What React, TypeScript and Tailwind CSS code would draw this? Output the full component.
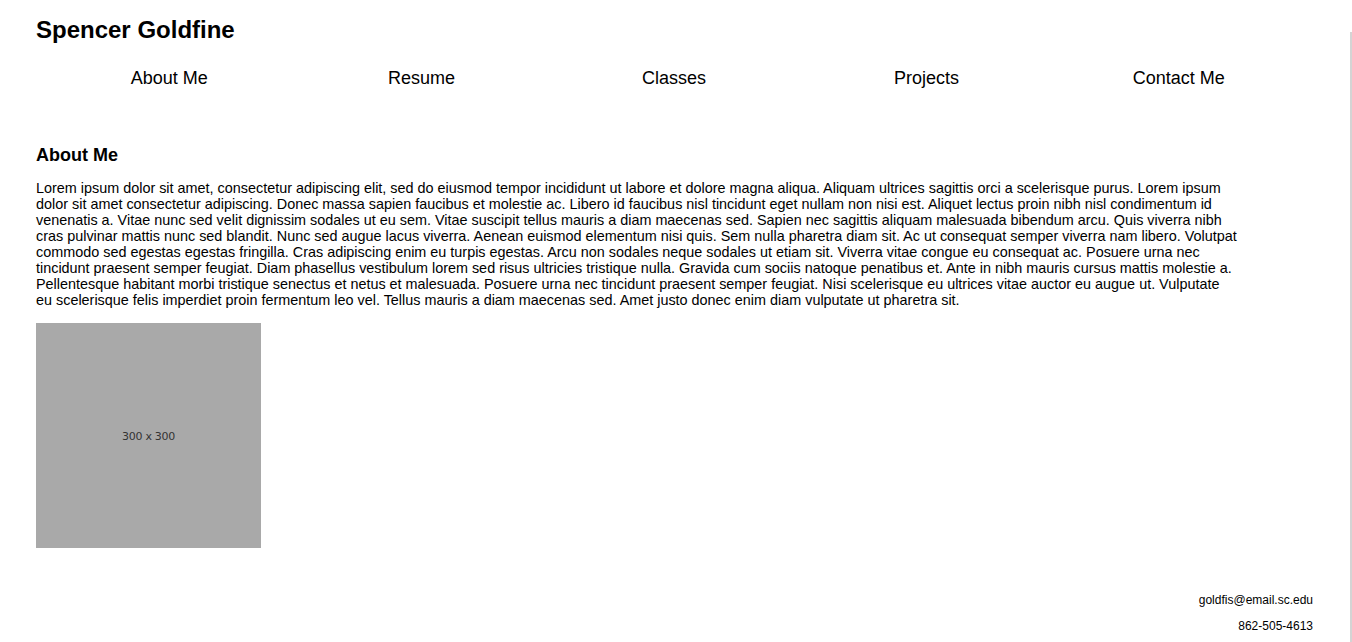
import React from 'react';

const NAV = ['About Me', 'Resume', 'Classes', 'Projects', 'Contact Me'];

const ABOUT =
  'Lorem ipsum dolor sit amet, consectetur adipiscing elit, sed do eiusmod tempor incididunt ut labore et dolore magna aliqua. Aliquam ultrices sagittis orci a scelerisque purus. Lorem ipsum dolor sit amet consectetur adipiscing. Donec massa sapien faucibus et molestie ac. Libero id faucibus nisl tincidunt eget nullam non nisi est. Aliquet lectus proin nibh nisl condimentum id venenatis a. Vitae nunc sed velit dignissim sodales ut eu sem. Vitae suscipit tellus mauris a diam maecenas sed. Sapien nec sagittis aliquam malesuada bibendum arcu. Quis viverra nibh cras pulvinar mattis nunc sed blandit. Nunc sed augue lacus viverra. Aenean euismod elementum nisi quis. Sem nulla pharetra diam sit. Ac ut consequat semper viverra nam libero. Volutpat commodo sed egestas egestas fringilla. Cras adipiscing enim eu turpis egestas. Arcu non sodales neque sodales ut etiam sit. Viverra vitae congue eu consequat ac. Posuere urna nec tincidunt praesent semper feugiat. Diam phasellus vestibulum lorem sed risus ultricies tristique nulla. Gravida cum sociis natoque penatibus et. Ante in nibh mauris cursus mattis molestie a. Pellentesque habitant morbi tristique senectus et netus et malesuada. Posuere urna nec tincidunt praesent semper feugiat. Nisi scelerisque eu ultrices vitae auctor eu augue ut. Vulputate eu scelerisque felis imperdiet proin fermentum leo vel. Tellus mauris a diam maecenas sed. Amet justo donec enim diam vulputate ut pharetra sit.';

export default function App() {
  return (
    <div className="relative min-h-[642px] bg-white text-black font-['Liberation_Sans',Arial,sans-serif]">
      <header className="pt-4">
        <h1 className="ml-9 text-[24px] leading-[28px] font-bold">Spencer Goldfine</h1>
        <nav className="mt-[22px] ml-[43px] w-[1262px] grid grid-cols-5">
          {NAV.map((item) => (
            <a key={item} className="text-center text-[18px] leading-[24px] text-black">
              {item}
            </a>
          ))}
        </nav>
      </header>

      <main className="ml-9 mt-[54px]">
        <h2 className="text-[18px] leading-[22px] font-bold">About Me</h2>
        <p className="mt-[14px] w-[1203px] text-[14.4px] leading-[16px]">{ABOUT}</p>
        <div className="mt-[15px] w-[225px] h-[225px] bg-[#a9a9a9] flex items-center justify-center">
          <span className="pt-1 text-[11px] text-[#333] font-['DejaVu_Sans',sans-serif] tracking-tight">300 x 300</span>
        </div>
      </main>

      <footer className="mt-[45px] mr-[39px] flex flex-col items-end gap-3 text-[12px] leading-[14px]">
        <span>goldfis@email.sc.edu</span>
        <span>862-505-4613</span>
      </footer>

      <div className="absolute right-0 top-8 bottom-0 w-[2px] bg-[#d4d4d4]" />
    </div>
  );
}
